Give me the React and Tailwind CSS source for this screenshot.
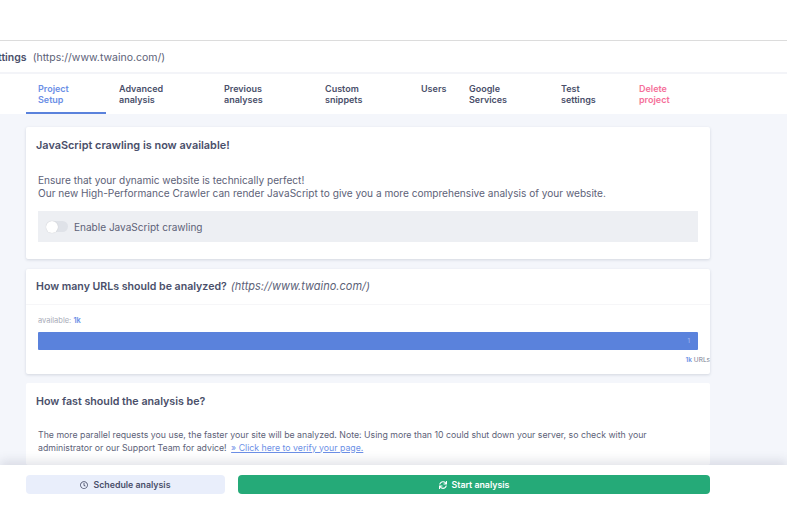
import React from "react";
import { FaSync, FaRegClock } from "react-icons/fa";

const tabs = [
  { a: "Project", b: "Setup", w: "w-[80px]", c: "text-[#6c8fe6] border-[#5a82dc]" },
  { a: "Advanced", b: "analysis", w: "w-[105px] ml-px", c: "text-[#4a4f6a] border-transparent" },
  { a: "Previous", b: "analyses", w: "w-[101px]", c: "text-[#4a4f6a] border-transparent" },
  { a: "Custom", b: "snippets", w: "w-[96px]", c: "text-[#4a4f6a] border-transparent" },
  { a: "Users", b: "", w: "w-[48px]", c: "text-[#4a4f6a] border-transparent" },
  { a: "Google", b: "Services", w: "w-[92px]", c: "text-[#4a4f6a] border-transparent" },
  { a: "Test", b: "settings", w: "w-[78px]", c: "text-[#4a4f6a] border-transparent" },
  { a: "Delete", b: "project", w: "w-[80px]", c: "text-[#f5709a] border-transparent" },
];

export default function App() {
  return (
    <div className="w-[800px] h-[530px] bg-white overflow-hidden font-['Inter','Liberation_Sans',sans-serif] text-[#4a4f6a]">
      <div className="w-[787px] h-[530px] flex flex-col overflow-hidden">
        <div className="h-[41px] shrink-0 border-b border-[#dcdcdc]" />
        <div className="h-[33px] shrink-0 border-b-2 border-[#f3f4f8] flex items-center pt-[2px] text-[10.5px] whitespace-nowrap">
          <span className="-ml-[15px] font-semibold">Settings</span>
          <span className="ml-[6px] text-[#5d6278]">(https://www.twaino.com/)</span>
        </div>
        <nav className="h-[40px] shrink-0 flex pl-[26px] text-[9px] leading-[10.5px] font-semibold">
          {tabs.map((t) => (
            <div key={t.a} className={`${t.w} ${t.c} h-[40px] border-b-2 pl-3 pt-[10px]`}>
              <div>{t.a}</div>
              {t.b && <div>{t.b}</div>}
            </div>
          ))}
        </nav>
        <main className="flex-1 min-h-0 overflow-hidden bg-[#f4f6fb] pt-[13px] pl-[26px] pr-[77px] flex flex-col">
          <section className="h-[132px] shrink-0 bg-white rounded-[2px] shadow-[0_1px_3px_rgba(60,70,100,0.18)] px-[10px] pt-[11px]">
            <h2 className="text-[10.9px] leading-[14px] font-semibold">JavaScript crawling is now available!</h2>
            <div className="mt-[21.5px] pl-[2px] text-[10.1px] leading-[13.5px] text-[#5d6278]">
              <p>Ensure that your dynamic website is technically perfect!</p>
              <p>Our new High-Performance Crawler can render JavaScript to give you a more comprehensive analysis of your website.</p>
            </div>
            <div className="mt-[10.5px] mx-[2px] h-[31px] bg-[#edeff3] flex items-center pl-2 text-[10.05px] text-[#5d6278]">
              <span className="relative w-[22px] h-[11px] rounded-full bg-[#dfe2e8] mr-[6px]">
                <span className="absolute left-0 -top-[0.5px] w-3 h-3 rounded-full bg-white shadow-[0_0_1px_rgba(0,0,0,0.2)]" />
              </span>
              <span className="pt-[2px]">Enable JavaScript crawling</span>
            </div>
          </section>
          <section className="mt-[10px] h-[105px] shrink-0 bg-white rounded-[2px] shadow-[0_1px_3px_rgba(60,70,100,0.18)]">
            <div className="h-[36px] border-b border-[#f6f6f8] flex items-center pl-[10px]">
              <span className="text-[10.6px] font-semibold">How many URLs should be analyzed?</span>
              <span className="italic ml-1 text-[11px] text-[#5d6278]">(https://www.twaino.com/)</span>
            </div>
            <div className="pl-3 pr-3 pt-[11px] leading-[8px]">
              <div className="text-[7.5px] pt-px text-[#a8abb8]">available: <span className="text-[#6c8fe6] font-semibold">1k</span></div>
              <div className="mt-[7px] h-[18px] bg-[#5a82dc] rounded-[1px] flex items-center justify-end pr-[8px] text-[6px] text-[#a9bfee]">1</div>
              <div className="mt-[6px] -mr-3 text-right text-[6.5px] text-[#7a7e92]"><span className="text-[#6c8fe6] font-semibold">1k</span> URLs</div>
            </div>
          </section>
          <section className="mt-[9px] flex-1 bg-white rounded-[2px] px-[10px] pt-[12px]">
            <h2 className="text-[10.7px] leading-[14px] font-semibold">How fast should the analysis be?</h2>
            <p className="mt-[20px] pl-[2px] text-[8.75px] leading-[12.5px] text-[#5d6278]">
              The more parallel requests you use, the faster your site will be analyzed. Note: Using more than 10 could shut down your server, so check with your<br />administrator or our Support Team for advice! <a className="ml-[2px] underline text-[#6c8fe6]">» Click here to verify your page.</a>
            </p>
          </section>
        </main>
        <footer className="relative z-10 h-[65px] shrink-0 bg-white shadow-[0_-4px_10px_rgba(60,70,100,0.15)] flex gap-[13px] pl-[26px] pr-[77px] pt-[10px] text-[8.8px] font-semibold">
          <button className="w-[199px] h-[19px] rounded-[4px] bg-[#e9eefb] flex items-center justify-center gap-[5px] text-[#4a4f6a] pt-px">
            <FaRegClock className="w-[8px] h-[8px]" />
            Schedule analysis
          </button>
          <button className="flex-1 h-[19px] rounded-[4px] bg-[#25aa78] flex items-center justify-center gap-[5px] text-white pt-px">
            <FaSync className="w-[8px] h-[8px]" />
            Start analysis
          </button>
        </footer>
      </div>
    </div>
  );
}
